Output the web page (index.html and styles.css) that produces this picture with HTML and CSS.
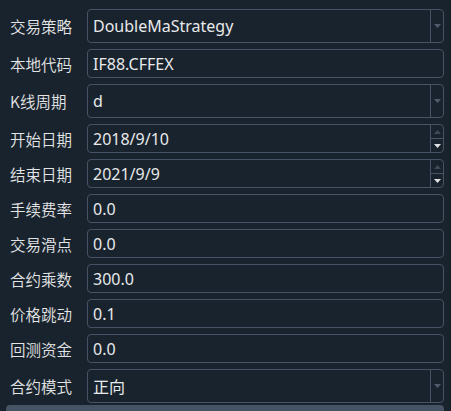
FILE: index.html
```html
<!DOCTYPE html>
<html lang="zh-CN">
<head>
<meta charset="utf-8">
<link rel="stylesheet" href="styles.css">
</head>
<body>
<div class="panel">
  <div class="form">
    <div class="label">交易策略</div>
    <div class="field combo"><span class="value">DoubleMaStrategy</span><span class="drop"><svg width="7" height="4" viewBox="0 0 7 4"><path d="M0 0H7L3.5 4Z" fill="#4d5b6b"/></svg></span></div>

    <div class="label">本地代码</div>
    <div class="field line"><span class="value">IF88.CFFEX</span></div>

    <div class="label">K线周期</div>
    <div class="field combo"><span class="value">d</span><span class="drop"><svg width="7" height="4" viewBox="0 0 7 4"><path d="M0 0H7L3.5 4Z" fill="#4d5b6b"/></svg></span></div>

    <div class="label">开始日期</div>
    <div class="field spin"><span class="value">2018/9/10</span><span class="arrows"><span class="up"><svg width="7" height="4" viewBox="0 0 7 4"><path d="M0 4H7L3.5 0Z" fill="#3d4a59"/></svg></span><span class="down"><svg width="7" height="4" viewBox="0 0 7 4"><path d="M0 0H7L3.5 4Z" fill="#e0e1e3"/></svg></span></span></div>

    <div class="label">结束日期</div>
    <div class="field spin"><span class="value">2021/9/9</span><span class="arrows"><span class="up"><svg width="7" height="4" viewBox="0 0 7 4"><path d="M0 4H7L3.5 0Z" fill="#3d4a59"/></svg></span><span class="down"><svg width="7" height="4" viewBox="0 0 7 4"><path d="M0 0H7L3.5 4Z" fill="#e0e1e3"/></svg></span></span></div>

    <div class="label">手续费率</div>
    <div class="field line"><span class="value">0.0</span></div>

    <div class="label">交易滑点</div>
    <div class="field line"><span class="value">0.0</span></div>

    <div class="label">合约乘数</div>
    <div class="field line"><span class="value">300.0</span></div>

    <div class="label">价格跳动</div>
    <div class="field line"><span class="value">0.1</span></div>

    <div class="label">回测资金</div>
    <div class="field line"><span class="value">0.0</span></div>

    <div class="label">合约模式</div>
    <div class="field combo"><span class="value">正向</span><span class="drop"><svg width="7" height="4" viewBox="0 0 7 4"><path d="M0 0H7L3.5 4Z" fill="#4d5b6b"/></svg></span></div>
  </div>
  <div class="button"></div>
</div>
</body>
</html>
```

FILE: styles.css
```css
html, body {
  margin: 0;
  padding: 0;
  background: #19232d;
  height: 100%;
  overflow: hidden;
}

body {
  font-family: "Noto Sans", "Noto Sans CJK SC", sans-serif;
  font-size: 16px;
  color: #e0e1e3;
}

.panel {
  padding: 9px 6px 0 6px;
  border-right: 1px solid #141d26;
  height: 100%;
  box-sizing: border-box;
}

.form {
  display: grid;
  grid-template-columns: 68px 1fr;
  column-gap: 9px;
  row-gap: 6px;
  padding-left: 4px;
}

.label {
  display: flex;
  align-items: center;
  white-space: nowrap;
  font-family: "Noto Sans CJK SC", sans-serif;
  font-size: 15.5px;
  font-weight: 350;
  color: #e3e4e6;
}

.field {
  display: flex;
  align-items: stretch;
  border: 1px solid #455364;
  border-radius: 4px;
  background: #19232d;
  box-sizing: border-box;
  height: 29px;
}

.field.combo {
  height: 34px;
}

.value {
  flex: 1;
  display: flex;
  align-items: center;
  padding-left: 5px;
  white-space: nowrap;
  color: #e8e9eb;
}

.drop {
  width: 12px;
  border-left: 1px solid #455364;
  display: flex;
  align-items: center;
  justify-content: center;
}

.arrows {
  width: 12px;
  border-left: 1px solid #455364;
  display: flex;
  flex-direction: column;
}

.arrows .up,
.arrows .down {
  flex: 1;
  display: flex;
  align-items: center;
  justify-content: center;
}

.arrows .down {
  border-top: 1px solid #455364;
}

.drop svg,
.arrows svg {
  display: block;
}

.button {
  margin-top: 2px;
  height: 20px;
  background: #455364;
  border-radius: 4px 4px 0 0;
}
```
